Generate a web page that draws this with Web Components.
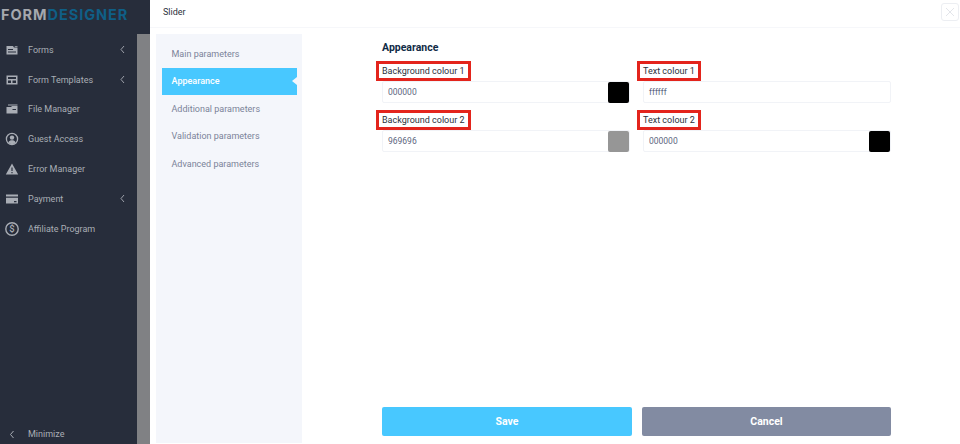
<!DOCTYPE html>
<html>
<head>
<meta charset="utf-8">
<title>Slider</title>
<style>
    html, body { margin: 0; height: 100%; overflow: hidden; }
    body { font-family: Roboto, "Liberation Sans", sans-serif; background: #fff; }
    .page { display: flex; width: 960px; height: 444px; }
</style>
</head>
<body>
<div class="page">
    <app-sidebar>
        <side-item label="Forms" arrow><svg viewBox="0 0 14 14"><path fill="currentColor" fill-rule="evenodd" d="M1.500 3h6.500l1 1.500h3.500V11.500h-11zM3 6v1h5V6zM3 8.500v1h8v-1zM9.500 3h3v.8h-2.500z"/></svg></side-item>
        <side-item label="Form Templates" arrow><svg viewBox="0 0 14 14"><path fill="currentColor" fill-rule="evenodd" d="M1.500 2.500h11v9h-11zM3 4v2h8V4zM3 7.500V10h3V7.500zM7.500 7.500V10H11V7.500z"/></svg></side-item>
        <side-item label="File Manager"><svg viewBox="0 0 14 14"><path fill="currentColor" fill-rule="evenodd" d="M3 2.500h9.500v1H3zM1.500 5L6 5l1-1h5.500v7.500h-11zM7.500 7v1h3.500V7z"/></svg></side-item>
        <side-item label="Guest Access"><svg viewBox="0 0 14 14"><circle cx="7" cy="7" r="5.600" fill="none" stroke="currentColor" stroke-width="1.300"/><circle cx="7" cy="5.600" r="2.200" fill="currentColor"/><path fill="currentColor" d="M3.400 10.400C4.100 8.800 5.500 8.300 7 8.300s2.900.5 3.600 2.100C9.700 11.500 8.400 12 7 12s-2.700-.5-3.600-1.600z"/></svg></side-item>
        <side-item label="Error Manager"><svg viewBox="0 0 14 14"><path fill="currentColor" fill-rule="evenodd" d="M7 1.500l6.200 11H.8zM6.400 5.500v3.500h1.200V5.500zM6.400 10v1.200h1.200V10z"/></svg></side-item>
        <side-item label="Payment" arrow><svg viewBox="0 0 14 14"><path fill="currentColor" fill-rule="evenodd" d="M1 2.500h12v2H1zM1 5.800h12v5.700H1zM9 9v1.200h2.500V9z"/></svg></side-item>
        <side-item label="Affiliate Program"><svg viewBox="0 0 14 14"><circle cx="7" cy="7" r="6.200" fill="none" stroke="currentColor" stroke-width="1.400"/><text x="7" y="10.400" text-anchor="middle" font-size="9.500" font-weight="500" font-family="Roboto" fill="currentColor">$</text></svg></side-item>
    </app-sidebar>
    <slider-modal title-text="Slider">
        <nav-panel slot="nav">
            <nav-entry>Main parameters</nav-entry>
            <nav-entry active>Appearance</nav-entry>
            <nav-entry>Additional parameters</nav-entry>
            <nav-entry>Validation parameters</nav-entry>
            <nav-entry>Advanced parameters</nav-entry>
        </nav-panel>
        <colour-field label="Background colour 1" value="000000" swatch="#000000"></colour-field>
        <colour-field label="Text colour 1" value="ffffff" swatch="#ffffff"></colour-field>
        <colour-field label="Background colour 2" value="969696" swatch="#969696"></colour-field>
        <colour-field label="Text colour 2" value="000000" swatch="#000000"></colour-field>
    </slider-modal>
</div>

<script>
class AppSidebar extends HTMLElement {
    constructor() {
        super();
        this.attachShadow({mode: "open"}).innerHTML = `
        <style>
            :host {
                display: flex;
                flex-direction: column;
                width: 150px;
                height: 444px;
                flex: none;
                background: linear-gradient(to right, #272d3b 137px, #808184 137px);
                color: #a9adb5;
            }
            .logo {
                height: 34px;
                background: #272d3b;
                font: 700 14.5px Inter, sans-serif;
                letter-spacing: 0.95px;
                line-height: 30px;
                padding-left: 1px;
                white-space: nowrap;
                overflow: hidden;
            }
            .logo b { color: #a5a8ae; font-weight: 700; }
            .logo span { color: #0f5f86; }
            .items { display: flex; flex-direction: column; width: 137px; flex: 1; padding-top: 1px; }
            .min {
                width: 137px;
                height: 20px;
                display: flex;
                align-items: center;
                font-size: 9px;
            }
            .min svg { width: 6px; height: 9px; margin-left: 8.500px; margin-right: 13.500px; }
        </style>
        <div class="logo"><b>FORM</b><span>DESIGNER</span></div>
        <div class="items"><slot></slot></div>
        <div class="min"><svg viewBox="0 0 6 9"><path d="M4.500 1L1.500 4.500l3 3.500" fill="none" stroke="currentColor"/></svg>Minimize</div>`;
    }
}

class SideItem extends HTMLElement {
    constructor() {
        super();
        this.attachShadow({mode: "open"}).innerHTML = `
        <style>
            :host {
                display: flex;
                align-items: center;
                height: 29.800px;
                font-size: 9px;
                position: relative;
            }
            .icon { width: 14px; height: 14px; margin: 0 9.500px 0 4.500px; flex: none; }
            ::slotted(svg) { width: 14px; height: 14px; display: block; }
            .label { flex: 1; white-space: nowrap; }
            .arrow { width: 5px; height: 9px; margin-right: 12px; flex: none; }
        </style>
        <div class="icon"><slot></slot></div>
        <div class="label">${this.getAttribute("label")}</div>
        ${this.hasAttribute("arrow") ? `<svg class="arrow" viewBox="0 0 5 9"><path d="M4 1L1 4.500 4 8" fill="none" stroke="currentColor" stroke-width="0.900"/></svg>` : ""}`;
    }
}

class SliderModal extends HTMLElement {
    constructor() {
        super();
        this.attachShadow({mode: "open"}).innerHTML = `
        <style>
            :host {
                display: flex;
                flex-direction: column;
                flex: 1;
                height: 444px;
                background: #fff;
                position: relative;
            }
            .head {
                height: 27px;
                flex: none;
                border-bottom: 1px solid #f6f7fa;
                font-size: 9px;
                line-height: 24px;
                padding-left: 13px;
                color: #2b313b;
            }
            .close {
                position: absolute;
                right: 1px;
                top: 3px;
                width: 16px;
                height: 16px;
                border: 1px solid #eceef2;
                border-radius: 3px;
                display: flex;
                align-items: center;
                justify-content: center;
            }
            .close svg { width: 10px; height: 10px; }
            .body { flex: 1; display: flex; padding: 6px 0 1px 6px; min-height: 0; }
            .content {
                flex: 1;
                display: flex;
                flex-direction: column;
                padding: 0 69px 7px 80px;
            }
            h3 {
                margin: 7px 0 0;
                font-size: 10.500px;
                font-weight: 700;
                line-height: 13px;
                color: #0f2b46;
            }
            .grid {
                display: grid;
                grid-template-columns: 248px 248px;
                column-gap: 13px;
                row-gap: 7px;
                margin-top: 6.500px;
            }
            .actions {
                margin-top: auto;
                display: grid;
                grid-template-columns: 250px 249px;
                column-gap: 10px;
            }
            .btn {
                height: 29px;
                border-radius: 2px;
                color: #fff;
                font-size: 10.500px;
                font-weight: 700;
                display: flex;
                align-items: center;
                justify-content: center;
            }
            .save { background: #48c8ff; }
            .cancel { background: #828ba2; }
        </style>
        <div class="head">${this.getAttribute("title-text")}</div>
        <div class="close"><svg viewBox="0 0 10 10"><path d="M1 1l8 8M9 1l-8 8" stroke="#e3e5ea" stroke-width="1"/></svg></div>
        <div class="body">
            <slot name="nav"></slot>
            <div class="content">
                <h3>Appearance</h3>
                <div class="grid"><slot></slot></div>
                <div class="actions">
                    <div class="btn save">Save</div>
                    <div class="btn cancel">Cancel</div>
                </div>
            </div>
        </div>`;
    }
}

class NavPanel extends HTMLElement {
    constructor() {
        super();
        this.attachShadow({mode: "open"}).innerHTML = `
        <style>
            :host {
                display: flex;
                flex-direction: column;
                width: 146px;
                flex: none;
                box-sizing: border-box;
                background: #f4f6fb;
                padding: 6px 5px 0 6px;
            }
        </style>
        <slot></slot>`;
    }
}

class NavEntry extends HTMLElement {
    constructor() {
        super();
        this.attachShadow({mode: "open"}).innerHTML = `
        <style>
            :host {
                display: flex;
                align-items: center;
                height: 27.500px;
                padding-left: 9.500px;
                font-size: 9px;
                color: #7b8399;
                position: relative;
            }
            :host([active]) {
                background: #48c8ff;
                color: #fff;
                font-weight: 500;
            }
            :host([active])::after {
                content: "";
                position: absolute;
                right: 0;
                top: 50%;
                margin-top: -4px;
                border: 4px solid transparent;
                border-left: 0;
                border-right: 5px solid #f4f6fb;
            }
        </style>
        <slot></slot>`;
    }
}

class ColourField extends HTMLElement {
    constructor() {
        super();
        let swatch = this.getAttribute("swatch");
        this.attachShadow({mode: "open"}).innerHTML = `
        <style>
            :host { display: block; }
            .label {
                display: inline-block;
                font-size: 9px;
                line-height: 13px;
                color: #2b313b;
                border: 3px solid #e3241c;
                padding: 1px 3px 0;
                margin-left: -6px;
                background: #fff;
                white-space: nowrap;
                vertical-align: top;
            }
            .input {
                position: relative;
                height: 22px;
                box-sizing: border-box;
                border: 1px solid #f1f3f7;
                border-radius: 2px;
                font-size: 8.500px;
                line-height: 20px;
                padding-left: 5px;
                color: #5d6680;
            }
            .swatch {
                position: absolute;
                right: 0;
                top: 0;
                width: 21px;
                height: 21px;
                border-radius: 2px;
                background: ${swatch};
            }
        </style>
        <div class="label">${this.getAttribute("label")}</div>
        <div class="input">${this.getAttribute("value")}${swatch == "#ffffff" ? "" : `<div class="swatch"></div>`}</div>`;
    }
}

customElements.define("app-sidebar", AppSidebar);
customElements.define("side-item", SideItem);
customElements.define("slider-modal", SliderModal);
customElements.define("nav-panel", NavPanel);
customElements.define("nav-entry", NavEntry);
customElements.define("colour-field", ColourField);
</script>
</body>
</html>
